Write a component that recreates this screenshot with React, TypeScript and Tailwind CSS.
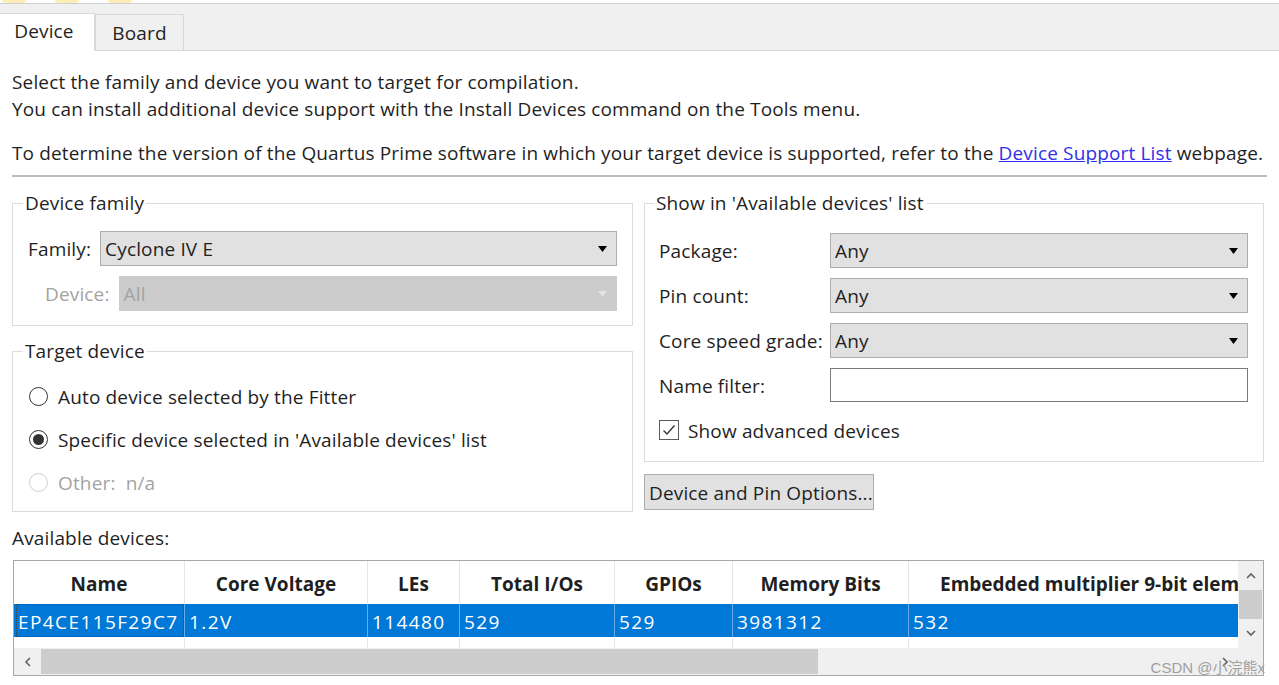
import React from 'react';

const Arrow = ({ color = '#000' }: { color?: string }) => (
  <svg width="9" height="6" viewBox="0 0 9 6">
    <path d="M0 0h9L4.5 6z" fill={color} />
  </svg>
);

const Combo = ({ value, disabled = false }: { value: string; disabled?: boolean }) => (
  <div
    className={`flex-1 flex items-center justify-between h-[35px] border pl-[4px] pr-[9px] ${
      disabled ? 'bg-[#cccccc] border-[#cccccc] text-[#a3a3a3]' : 'bg-[#e1e1e1] border-[#adadad]'
    }`}
  >
    <span className="pt-[2px]">{value}</span>
    <Arrow color={disabled ? '#e4e4e4' : '#000'} />
  </div>
);

const Radio = ({ checked = false, disabled = false, label }: { checked?: boolean; disabled?: boolean; label: string }) => (
  <div className={`flex items-center h-[43px] ${disabled ? 'text-[#a3a3a3]' : ''}`}>
    <div
      className={`w-[19px] h-[19px] rounded-full border flex items-center justify-center bg-white ${
        disabled ? 'border-[#cfcfcf]' : 'border-[#333333]'
      }`}
    >
      {checked && <div className="w-[11px] h-[11px] rounded-full bg-[#333333]" />}
    </div>
    <span className="ml-[10px] pt-[2px] whitespace-pre">{label}</span>
  </div>
);

const cols = [
  { name: 'Name', w: 'w-[171px]', val: 'EP4CE115F29C7' },
  { name: 'Core Voltage', w: 'w-[183px]', val: '1.2V' },
  { name: 'LEs', w: 'w-[92px]', val: '114480' },
  { name: 'Total I/Os', w: 'w-[155px]', val: '529' },
  { name: 'GPIOs', w: 'w-[118px]', val: '529' },
  { name: 'Memory Bits', w: 'w-[176px]', val: '3981312' },
];

const Chevron = ({ d }: { d: string }) => (
  <svg width="12" height="12" viewBox="0 0 12 12">
    <path d={d} fill="none" stroke="#606060" strokeWidth="1.6" />
  </svg>
);

export default function App() {
  return (
    <div className="relative w-[1279px] h-[685px] overflow-hidden bg-white font-['Open_Sans',sans-serif] text-[19px] tracking-[0.15px] text-[#1f1f1f]">
      {/* cropped toolbar remains */}
      <div className="h-[3px] flex bg-white">
        <div className="ml-[2px] w-[24px] h-[3px] rounded-b-full bg-[#fdeeb8]" />
        <div className="ml-[29px] w-[24px] h-[3px] rounded-b-full bg-[#fdeeb8]" />
        <div className="ml-[29px] w-[24px] h-[3px] rounded-b-full bg-[#fdeeb8]" />
      </div>
      <div className="h-px bg-[#cfcfcf]" />

      {/* tabs */}
      <div className="h-[47px] bg-[#f0f0f0] flex items-end border-b border-[#d9d9d9]">
        <div className="w-[95px] h-[38px] -mb-px bg-white border-t border-r border-[#d9d9d9] flex items-center justify-center pb-[3px] pr-[6px]">
          Device
        </div>
        <div className="w-[89px] h-[36px] border border-b-0 border-[#d9d9d9] flex items-center justify-center pt-[2px]">
          Board
        </div>
      </div>

      <div className="px-[12px] pt-[18px]">
        <p className="leading-[27px]">Select the family and device you want to target for compilation.</p>
        <p className="leading-[27px]">You can install additional device support with the Install Devices command on the Tools menu.</p>
        <p className="leading-[27px] mt-[17px] whitespace-nowrap">
          To determine the version of the Quartus Prime software in which your target device is supported, refer to the{' '}
          <span className="text-[#3030e8] underline">Device Support List</span> webpage.
        </p>
        <div className="mt-[8px] h-[2px] bg-[#bdbdbd]" />

        <div className="mt-[13px] grid grid-cols-[621px_620px] gap-x-[11px]">
          {/* left column */}
          <div className="flex flex-col">
            <fieldset className="border border-[#dcdcdc] p-0">
              <legend className="ml-[10px] px-[2px] leading-[27px]">Device family</legend>
              <div className="pl-[15px] pr-[15px] pb-[14px]">
                <div className="mt-[14px] flex items-center">
                  <span className="pt-[2px]">Family:</span>
                  <div className="ml-[9px] flex-1 flex">
                    <Combo value="Cyclone IV E" />
                  </div>
                </div>
                <div className="mt-[10px] flex items-center pl-[17px]">
                  <span className="pt-[2px] text-[#a3a3a3]">Device:</span>
                  <div className="ml-[9px] flex-1 flex">
                    <Combo value="All" disabled />
                  </div>
                </div>
              </div>
            </fieldset>

            <fieldset className="mt-[12px] border border-[#dcdcdc] p-0">
              <legend className="ml-[10px] px-[2px] leading-[27px]">Target device</legend>
              <div className="mt-[10px] pl-[16px] pb-[7px]">
                <Radio label="Auto device selected by the Fitter" />
                <Radio checked label="Specific device selected in 'Available devices' list" />
                <Radio disabled label="Other:  n/a" />
              </div>
            </fieldset>
          </div>

          {/* right column */}
          <div className="flex flex-col">
            <fieldset className="border border-[#dcdcdc] p-0">
              <legend className="ml-[9px] px-[2px] leading-[27px]">Show in 'Available devices' list</legend>
              <div className="pl-[14px] pr-[15px] pb-[21px]">
                <div className="mt-[16px] flex flex-col gap-[11px]">
                  {['Package:', 'Pin count:', 'Core speed grade:'].map((l) => (
                    <div key={l} className="flex items-center">
                      <span className="w-[171px] pt-[2px] whitespace-nowrap">{l}</span>
                      <div className="flex-1 flex h-[34px]">
                        <Combo value="Any" />
                      </div>
                    </div>
                  ))}
                  <div className="flex items-center">
                    <span className="w-[171px] pt-[2px]">Name filter:</span>
                    <div className="flex-1 h-[34px] bg-white border border-[#7a7a7a]" />
                  </div>
                </div>
                <div className="mt-[18px] flex items-center h-[20px]">
                  <div className="w-[20px] h-[20px] border border-[#5a5a5a] bg-white flex items-center justify-center">
                    <svg width="14" height="12" viewBox="0 0 14 12">
                      <path d="M1.5 6.5l3.5 3.5L12.5 1.5" fill="none" stroke="#333" strokeWidth="1.3" />
                    </svg>
                  </div>
                  <span className="ml-[9px] pt-[2px]">Show advanced devices</span>
                </div>
              </div>
            </fieldset>
            <button className="mt-[12px] w-[230px] h-[36px] bg-[#e1e1e1] border border-[#adadad] text-left pl-[4px] pt-[2px] whitespace-nowrap">
              Device and Pin Options...
            </button>
          </div>
        </div>

        <p className="mt-[13px] leading-[27px]">Available devices:</p>

        {/* table */}
        <div className="mt-[8px] ml-px w-[1251px] h-[116px] border border-[#a8a8a8] flex flex-col">
          <div className="flex h-[87px]">
            <div className="w-[1224px] overflow-hidden flex flex-col">
              {/* header */}
              <div className="flex h-[43px] font-bold tracking-normal">
                {cols.map((c) => (
                  <div key={c.name} className={`${c.w} shrink-0 border-r border-[#e6e6e6] flex items-center justify-center pt-[3px]`}>
                    {c.name}
                  </div>
                ))}
                <div className="w-[360px] shrink-0 flex items-center pl-[31px] pt-[3px] whitespace-nowrap">
                  Embedded multiplier 9-bit elements
                </div>
              </div>
              {/* selected row */}
              <div className="flex h-[33px] bg-[#0078d7] text-white tracking-[1.4px]">
                {cols.map((c, i) => (
                  <div
                    key={c.name}
                    className={`${c.w} shrink-0 border-r border-[#6aaae6] flex items-center ${
                      i === 0 ? 'pl-[2px]' : 'pl-[4px] pt-[3px]'
                    }`}
                  >
                    {i === 0 ? (
                      <span className="w-full h-full flex items-center pl-[1px] pt-[3px] border border-dotted border-[#4a3a2a] whitespace-nowrap overflow-hidden">
                        {c.val}
                      </span>
                    ) : (
                      c.val
                    )}
                  </div>
                ))}
                <div className="w-[360px] shrink-0 flex items-center pl-[4px] pt-[3px]">532</div>
              </div>
              {/* empty row */}
              <div className="flex h-[11px]">
                {cols.map((c) => (
                  <div key={c.name} className={`${c.w} shrink-0 border-r border-[#e6e6e6]`} />
                ))}
              </div>
            </div>
            {/* vertical scrollbar */}
            <div className="w-[25px] bg-[#f0f0f0] flex flex-col items-center">
              <div className="h-[29px] flex items-center justify-center">
                <Chevron d="M2 8l4-4 4 4" />
              </div>
              <div className="w-[23px] h-[29px] bg-[#cdcdcd]" />
              <div className="h-[28px] flex items-center justify-center">
                <Chevron d="M2 4l4 4 4-4" />
              </div>
            </div>
          </div>
          {/* horizontal scrollbar */}
          <div className="flex h-[27px]">
            <div className="w-[1224px] bg-[#f0f0f0] flex items-center">
              <div className="w-[27px] h-full flex items-center justify-center">
                <Chevron d="M8 2L4 6l4 4" />
              </div>
              <div className="w-[777px] h-[25px] bg-[#cdcdcd]" />
              <div className="flex-1" />
              <div className="w-[27px] h-full flex items-center justify-center">
                <Chevron d="M4 2l4 4-4 4" />
              </div>
            </div>
            <div className="w-[25px] bg-[#f0f0f0]" />
          </div>
        </div>
      </div>

      {/* watermark */}
      <div className="absolute right-[14px] top-[657px] text-[15px] tracking-normal text-[#a0a0a0] font-['Liberation_Sans','Noto_Sans_CJK_SC',sans-serif]">
        CSDN @小浣熊x
      </div>
    </div>
  );
}
